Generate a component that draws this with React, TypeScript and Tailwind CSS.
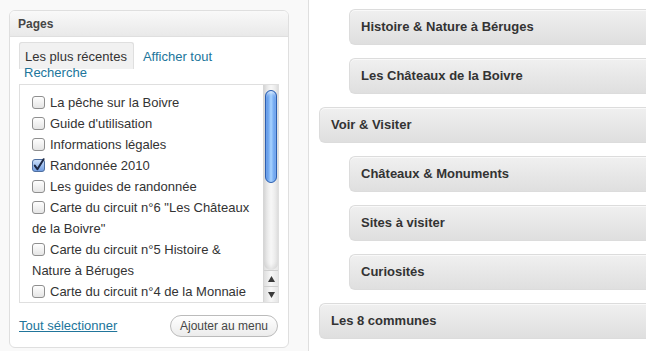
import React from "react";

function Box({ checked = false }: { checked?: boolean }) {
  return (
    <svg width="14" height="14" viewBox="0 0 14 14" className="shrink-0 mr-[4px] overflow-visible">
      <defs>
        <linearGradient id="cbw" x1="0" y1="0" x2="0" y2="1">
          <stop offset="0" stopColor="#ffffff" />
          <stop offset="1" stopColor="#e4e4e4" />
        </linearGradient>
        <linearGradient id="cbb" x1="0" y1="0" x2="0" y2="1">
          <stop offset="0" stopColor="#cfe2fb" />
          <stop offset="1" stopColor="#6e9be0" />
        </linearGradient>
      </defs>
      <rect x="0.5" y="0.5" width="12" height="12" rx="2.5" fill={checked ? "url(#cbb)" : "url(#cbw)"} stroke={checked ? "#4f6f9f" : "#8f8f8f"} />
      {checked && (
        <path d="M2.8 6.6 L5.4 10.3 L11.6 0.2" stroke="#1b2744" strokeWidth="2" fill="none" strokeLinecap="round" strokeLinejoin="round" />
      )}
    </svg>
  );
}

function Row({ text, checked, cont }: { text: string; checked?: boolean; cont?: string }) {
  return (
    <div>
      <div className="flex items-center h-[21px] whitespace-nowrap">
        <Box checked={checked} />
        <span>{text}</span>
      </div>
      {cont && <div className="h-[21px] leading-[21px] whitespace-nowrap">{cont}</div>}
    </div>
  );
}

function Item({ label, sub }: { label: string; sub?: boolean }) {
  return (
    <div
      className={`${sub ? "ml-[30px]" : ""} h-[36px] mb-[13px] flex items-center pl-[11px] rounded-l-[6px] border border-r-0 border-[#dcdcdc] bg-gradient-to-b from-[#f0f0f0] to-[#dfdfdf] text-[13px] font-bold text-[#333333] shadow-[inset_0_1px_0_#f9f9f9]`}
    >
      {label}
    </div>
  );
}

export default function App() {
  return (
    <div className="flex w-[646px] h-[351px] overflow-hidden font-['Liberation_Sans',Arial,sans-serif] text-[13px] text-[#333333]">
      <div className="w-[309px] shrink-0 bg-[#f9f9f9] border-r border-[#dfdfdf] pl-[9px] pt-[10px]">
        <div className="w-[280px] h-[338px] bg-white border border-[#dfdfdf] rounded-[6px] overflow-hidden flex flex-col">
          <div className="h-[26px] shrink-0 flex items-center pl-[8px] border-b border-[#dfdfdf] bg-gradient-to-b from-[#f9f9f9] to-[#e9e9e9] text-[12px] font-bold text-[#464646]">
            Pages
          </div>
          <div className="px-[9px] pt-[12px]">
            <div className="leading-[16px] whitespace-nowrap">
              <span className="bg-[#f1f1f1] border border-b-0 border-[#dfdfdf] rounded-t-[3px] pl-[5px] pr-[6px] pt-[6px] pb-[5px]">
                Les plus récentes
              </span>
              <span className="ml-[9px] text-[#21759b]">Afficher tout</span>
              <br />
              <span className="pl-[5px] text-[#21759b]">Recherche</span>
            </div>
            <div className="mt-[3px] h-[219px] border border-[#dfdfdf] flex">
              <div className="flex-1 overflow-hidden pt-[7px] pl-[12px]">
                <Row text="La pêche sur la Boivre" />
                <Row text="Guide d'utilisation" />
                <Row text="Informations légales" />
                <Row text="Randonnée 2010" checked />
                <Row text="Les guides de randonnée" />
                <Row text={'Carte du circuit n°6 "Les Châteaux'} cont={'de la Boivre"'} />
                <Row text="Carte du circuit n°5 Histoire &" cont="Nature à Béruges" />
                <Row text="Carte du circuit n°4 de la Monnaie" />
              </div>
              <div className="w-[15px] shrink-0 flex flex-col border-l border-[#d6d6d6] bg-gradient-to-r from-[#dedede] via-[#f7f7f7] to-[#e6e6e6]">
                <div className="flex-1 pt-[5px] px-[1px] rounded-b-[7px] shadow-[inset_0_-3px_4px_rgba(0,0,0,0.08)]">
                  <div className="h-[93px] rounded-full border border-[#2c5fb0] bg-gradient-to-r from-[#3c7fe0] via-[#a9d3ff] to-[#4a8ae6] shadow-[inset_0_2px_3px_rgba(255,255,255,0.6)]" />
                </div>
                <div className="h-[16px] border-t border-[#cfcfcf] flex items-center justify-center">
                  <svg width="7" height="6" viewBox="0 0 7 6">
                    <path d="M3.5 0 L7 6 L0 6 Z" fill="#3a3a3a" />
                  </svg>
                </div>
                <div className="h-[16px] border-t border-[#cfcfcf] flex items-center justify-center">
                  <svg width="7" height="6" viewBox="0 0 7 6">
                    <path d="M0 0 L7 0 L3.5 6 Z" fill="#3a3a3a" />
                  </svg>
                </div>
              </div>
            </div>
            <div className="mt-[12px] flex items-center justify-between">
              <span className="text-[#21759b] underline">Tout sélectionner</span>
              <span className="mr-[1px] w-[108px] h-[22px] flex items-center justify-center rounded-full border border-[#bbbbbb] bg-gradient-to-b from-[#ffffff] to-[#ececec] text-[12px] text-[#464646]">
                Ajouter au menu
              </span>
            </div>
          </div>
        </div>
      </div>
      <div className="flex-1 min-w-0 bg-white pl-[10px] pt-[9px] overflow-hidden">
        <Item label="Histoire & Nature à Béruges" sub />
        <Item label="Les Châteaux de la Boivre" sub />
        <Item label="Voir & Visiter" />
        <Item label="Châteaux & Monuments" sub />
        <Item label="Sites à visiter" sub />
        <Item label="Curiosités" sub />
        <Item label="Les 8 communes" />
      </div>
    </div>
  );
}
